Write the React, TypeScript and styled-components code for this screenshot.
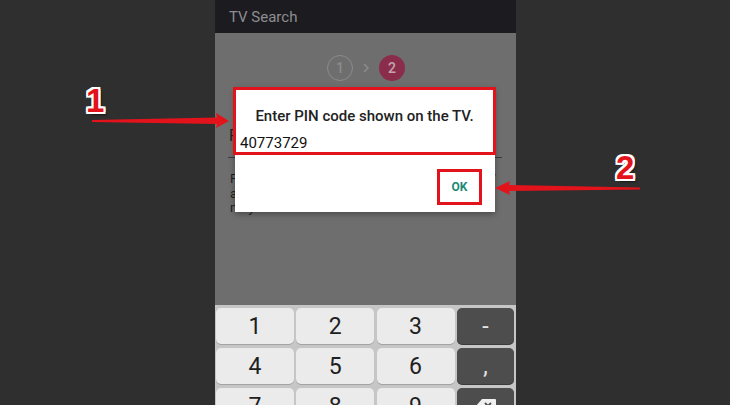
import React from 'react';
import styled, { createGlobalStyle } from 'styled-components';

const GlobalStyle = createGlobalStyle`
  html, body {
    margin: 0;
    padding: 0;
    background: #2f2f2f;
    font-family: Roboto, 'Noto Sans', sans-serif;
  }
`;

const Page = styled.div`
  position: relative;
  width: 730px;
  height: 405px;
  overflow: hidden;
  display: flex;
  padding-left: 215px;
  box-sizing: border-box;
  background: #2f2f2f;
`;

const Phone = styled.div`
  position: relative;
  width: 301px;
  height: 405px;
  display: flex;
  flex-direction: column;
`;

const AppBar = styled.div`
  height: 33px;
  flex: none;
  display: flex;
  align-items: center;
  padding-left: 14px;
  background: #1c1b20;
  color: #8e8e92;
  font-size: 15px;
`;

const Content = styled.div`
  flex: 1;
  display: flex;
  flex-direction: column;
  background: #6e6e6e;
  padding: 22px 14px 0 13px;
`;

const Steps = styled.div`
  display: flex;
  align-items: center;
  justify-content: center;
  gap: 8px;
  margin-left: 2px;
`;

const StepCircle = styled.div<{ $active?: boolean }>`
  width: 26px;
  height: 26px;
  box-sizing: border-box;
  border-radius: 50%;
  display: flex;
  align-items: center;
  justify-content: center;
  font-size: 14px;
  font-weight: 500;
  border: ${({ $active }) => ($active ? 'none' : '1.5px solid #8c8c8c')};
  background: ${({ $active }) => ($active ? '#8a2d4b' : 'transparent')};
  color: ${({ $active }) => ($active ? '#c7a3b0' : '#8c8c8c')};
`;

const Field = styled.div`
  margin-top: 46px;
  padding-bottom: 12px;
  border-bottom: 1px solid #3a3a3a;
  font-size: 16px;
  line-height: 18px;
  color: #1e1e1e;
  padding-left: 1px;
`;

const Hint = styled.p`
  margin: 14px 0 0;
  font-size: 13px;
  line-height: 14.5px;
  color: #1e1e1e;
  padding-left: 2px;
`;

const Dialog = styled.div`
  position: absolute;
  left: 20px;
  top: 88px;
  width: 260px;
  height: 124px;
  background: #fff;
  box-shadow: 0 2px 6px rgba(0, 0, 0, 0.35);
  display: flex;
  flex-direction: column;
`;

const Highlight = styled.div`
  margin: -1px -1px 0 -2px;
  height: 68px;
  box-sizing: border-box;
  border: 3px solid #e3131b;
  padding: 16px 0 0 4px;
`;

const Title = styled.div`
  text-align: center;
  font-size: 15px;
  line-height: 20px;
  font-weight: 500;
  color: #222;
  margin-right: 4px;
`;

const PinValue = styled.div`
  margin-top: 8px;
  font-size: 15px;
  line-height: 18px;
  color: #111;
`;

const Actions = styled.div`
  display: flex;
  justify-content: flex-end;
  padding: 14px 13px 0 0;
`;

const OkButton = styled.div`
  width: 45px;
  height: 36px;
  box-sizing: border-box;
  border: 3px solid #e3131b;
  display: flex;
  align-items: center;
  justify-content: center;
  color: #1c8a74;
  font-size: 12px;
  font-weight: 700;
`;

const Keyboard = styled.div`
  height: 100px;
  flex: none;
  background: #c6c6c6;
  box-sizing: border-box;
  padding: 3px 2px 0 1px;
  display: grid;
  grid-template-columns: 1fr 1fr 1fr 57px;
  grid-auto-rows: 36px;
  column-gap: 2.5px;
  row-gap: 4px;
  overflow: hidden;
`;

const Key = styled.div<{ $dark?: boolean }>`
  border-radius: 5px;
  display: flex;
  align-items: center;
  justify-content: center;
  font-size: 23px;
  background: ${({ $dark }) => ($dark ? '#4d4d4d' : '#ebebeb')};
  color: ${({ $dark }) => ($dark ? '#e6e6e6' : '#202020')};
  box-shadow: 0 1px 0 ${({ $dark }) => ($dark ? '#3a3a3a' : '#a3a3a3')};
`;

const Callout = styled.div<{ $x: number; $y: number }>`
  position: absolute;
  left: ${({ $x }) => $x}px;
  top: ${({ $y }) => $y}px;
  font-family: 'Liberation Sans', Arial, sans-serif;
  font-weight: 700;
  font-size: 33px;
  line-height: 1;
  color: #e3131b;
  text-shadow: -2px -2px 0 #fff, 2px -2px 0 #fff, -2px 2px 0 #fff, 2px 2px 0 #fff,
    0 -2px 0 #fff, 0 2px 0 #fff, -2px 0 0 #fff, 2px 0 0 #fff, 3px 3px 2px rgba(0, 0, 0, 0.5);
`;

const Arrows = styled.svg`
  position: absolute;
  left: 0;
  top: 0;
  width: 730px;
  height: 405px;
  pointer-events: none;
`;

const keys: { label: string; dark?: boolean }[] = [
  { label: '1' }, { label: '2' }, { label: '3' }, { label: '-', dark: true },
  { label: '4' }, { label: '5' }, { label: '6' }, { label: ',', dark: true },
  { label: '7' }, { label: '8' }, { label: '9' }, { label: 'del', dark: true },
];

const Backspace = () => (
  <svg width="22" height="16" viewBox="0 0 22 16">
    <path d="M7 1h13a1 1 0 0 1 1 1v12a1 1 0 0 1-1 1H7L1 8z" fill="#f0f0f0" />
    <path d="M10 5l6 6M16 5l-6 6" stroke="#4d4d4d" strokeWidth="1.8" />
  </svg>
);

export default function App() {
  return (
    <Page>
      <GlobalStyle />
      <Phone>
        <AppBar>TV Search</AppBar>
        <Content>
          <Steps>
            <StepCircle>1</StepCircle>
            <svg width="10" height="12" viewBox="0 0 10 12">
              <path d="M3 2l4 4-4 4" stroke="#8c8c8c" strokeWidth="1.5" fill="none" />
            </svg>
            <StepCircle $active>2</StepCircle>
          </Steps>
          <Field>PIN code</Field>
          <Hint>
            Please enter the PIN code displayed on the TV
            and then tap OK to register this device
            now. It may take a moment.
          </Hint>
        </Content>
        <Keyboard>
          {keys.map((k) => (
            <Key key={k.label} $dark={k.dark}>
              {k.label === 'del' ? <Backspace /> : k.label}
            </Key>
          ))}
        </Keyboard>
        <Dialog>
          <Highlight>
            <Title>Enter PIN code shown on the TV.</Title>
            <PinValue>40773729</PinValue>
          </Highlight>
          <Actions>
            <OkButton>OK</OkButton>
          </Actions>
        </Dialog>
      </Phone>
      <Arrows viewBox="0 0 730 405">
        <polygon
          points="92,120 217,117.5 216,113 229,121 216,128 217,124 92,122"
          fill="#e3131b"
        />
        <polygon
          points="640,187.5 509,185 510,181 495,188 510,195 509,191 640,189.5"
          fill="#e3131b"
        />
      </Arrows>
      <Callout $x={86} $y={84}>1</Callout>
      <Callout $x={616} $y={151}>2</Callout>
    </Page>
  );
}
